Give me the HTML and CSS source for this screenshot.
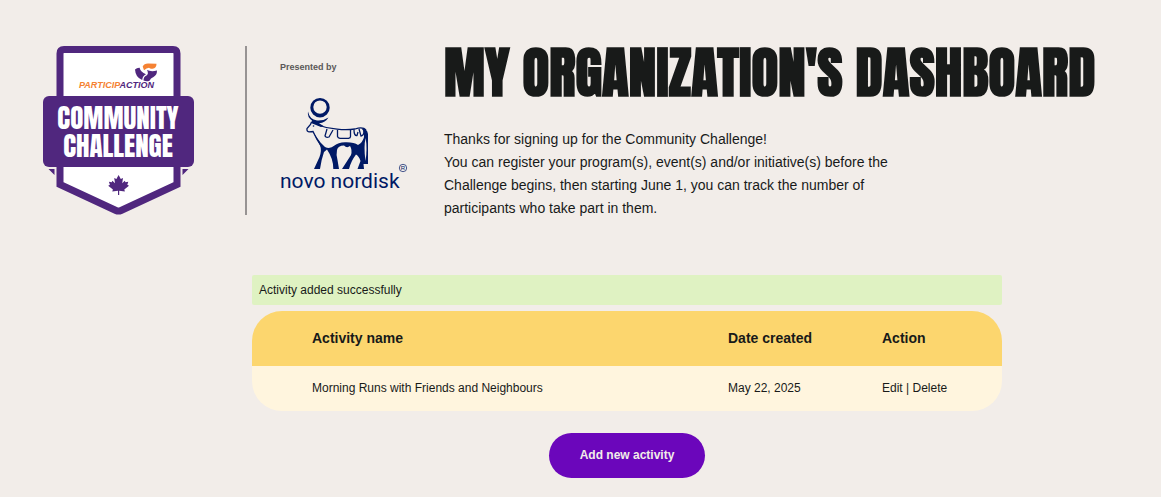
FILE: index.html
```html
<!DOCTYPE html>
<html lang="en">
<head>
    <meta charset="UTF-8">
    <meta name="viewport" content="width=device-width, initial-scale=1.0">
    <title>My Organization's Dashboard</title>
    <link rel="stylesheet" href="styles.css">
</head>
<body>
    <!-- Header -->
    <header class="header">
        <svg class="badge" viewBox="0 0 151 169" role="img" aria-label="ParticipACTION Community Challenge">
            <path class="shield" d="M21 3.500H130Q134 3.500 134 7.500V138.500L78 164.500Q75.500 165.700 73 164.500L17 138.500V7.500Q17 3.500 21 3.500Z"/>
            <path class="purple" d="M5.500 123H11.500V129Z M139.500 123H145.500L139.500 129Z"/>
            <rect class="band" x="0" y="50" width="151" height="71" rx="6"/>
            <path class="orange" d="M99.700 20.500Q101 17.500 105 17.500L113.500 17.700Q113.500 22 109.500 22.700Q107.500 23.300 106 21.800Q103.500 22 101 24.300Z"/>
            <path class="purple" d="M92 23.500Q94 21.500 96.600 21.700Q97.500 26 103 28.300Q99.500 30 99.200 34Q92.500 31.500 92 23.500Z"/>
            <path class="purple" d="M104 24Q108 26 114 24.500Q114 29 110.500 31Q107.500 32 106.500 34.800Q103.500 36 100.500 34.500Q100.500 30.500 103.500 29.500Q106 28 104 24Z"/>
            <text class="badge-brand" x="36" y="42"><tspan class="orange">PARTICIP</tspan><tspan class="purple">ACTION</tspan></text>
            <text class="badge-title" x="75" y="83">COMMUNITY</text>
            <text class="badge-title" x="75" y="111">CHALLENGE</text>
            <path class="purple" d="M75.600 129L77.800 133L80 132L79.200 137.200L81.800 134.800L82.500 136.300L85.300 135.800L84.300 138.700L86 139.700L81.300 143.500L81.900 145.400L76.200 144.700V149H75V144.700L69.300 145.400L69.900 143.500L65.200 139.700L66.900 138.700L65.900 135.800L68.700 136.300L69.400 134.800L72 137.200L71.200 132L73.400 133Z"/>
        </svg>

        <div class="sponsor">
            <p class="sponsor-label">Presented by</p>
            <svg class="sponsor-logo" viewBox="0 0 128 95" role="img" aria-label="Novo Nordisk">
                <path class="navy" fill-rule="evenodd" d="M40 1A9.700 9.700 0 1 0 40 20.400A9.700 9.700 0 1 0 40 1ZM40 3.400A6.700 6.700 0 1 1 40 16.800A6.700 6.700 0 1 1 40 3.400Z"/>
                <path class="navy" d="M28 14.500Q29.500 22.500 37 23.500Q43.500 24 48.500 20.500Q45.500 25.500 39 26.300L43.500 29L41 30L31 26L32 23.500Q27 20 28 14.500Z"/>
                <path class="navy-line" d="M31.500 25L30.500 27.500L27 31.500Q26.500 34.500 29 34.800L33 34.500L37 42.500L42 50"/>
                <path class="navy-line" d="M38 28Q47 31.500 57 32.200Q67 33.300 75 32Q83 29.500 86 33"/>
                <path class="navy-line" d="M47 32L45 39Q46 41 49 40L53 33M57.500 33V39.500Q58 41 60 41.300H68.500Q70.500 41 70.500 39.500V33M74 33Q74 39 77 38.500L78 35M79 32L81 39Q84 38.500 84 34"/>
                <circle class="navy" cx="33.500" cy="29" r="0.800"/>
                <path class="navy" d="M33 35L40.500 45.500L45 50Q50 52.500 54.500 48.500Q58 45.500 65 45.300Q74 45 78 48Q83 45 84 40Q84.500 34 81.500 31.500Q87 31 88 37V67H83.500L84 72H77.500L80.500 64Q79 59 76 57.500Q71 64 69 72H62L71 58Q72.500 53 70 49Q67 51.500 64 48.500Q58 48.500 57 53Q56 57 57.500 63L59 72H53.300Q53.500 62 47 52.500L44 55Q41.500 62 40 72H34L39.500 60Q42 53 40 48.500Z"/>
                <path class="cut" d="M85.600 41Q83.500 50 85.500 64Q87.500 52 85.600 41Z"/>
                <circle class="mark-ring" cx="123" cy="71" r="3.700"/>
                <text class="mark-text" x="123" y="73">R</text>
                <text class="sponsor-name" x="0" y="91">novo nordisk</text>
            </svg>
        </div>

        <div class="intro">
            <h1>MY ORGANIZATION'S DASHBOARD</h1>
            <p>Thanks for signing up for the Community Challenge!<br>
            You can register your program(s), event(s) and/or initiative(s) before the Challenge begins, then starting June 1, you can track the number of participants who take part in them.</p>
        </div>
    </header>

    <!-- Activities -->
    <main class="activities">
        <div class="alert" role="status">Activity added successfully</div>
        <table class="activity-table">
            <thead>
                <tr>
                    <th class="col-name" scope="col">Activity name</th>
                    <th class="col-date" scope="col">Date created</th>
                    <th scope="col">Action</th>
                </tr>
            </thead>
            <tbody>
                <tr>
                    <td>Morning Runs with Friends and Neighbours</td>
                    <td>May 22, 2025</td>
                    <td><a href="#">Edit</a> | <a href="#">Delete</a></td>
                </tr>
            </tbody>
        </table>
        <button class="add-button" type="button">Add new activity</button>
    </main>
</body>
</html>
```
FILE: styles.css
```css
body {
    background-color: #f2ede9;
    color: #181a19;
    font-family: Arial, "Liberation Sans", sans-serif;
    margin: 0;
    padding: 0;
}

.header {
    display: flex;
    align-items: flex-start;
    padding: 46px 43px 0;
}

.badge {
    flex: none;
    width: 151px;
    height: 169px;
    margin-right: 51px;
}

.shield {
    fill: #ffffff;
    stroke: #50277e;
    stroke-width: 7px;
}

.purple,
.band {
    fill: #50277e;
}

.orange {
    fill: #f58233;
}

.badge-brand {
    font-size: 9px;
    font-weight: bold;
    font-style: italic;
}

.badge-title {
    fill: #ffffff;
    font-family: Anton, "Liberation Sans Narrow", "Liberation Sans", sans-serif;
    font-size: 27px;
    text-anchor: middle;
}

.sponsor {
    flex: none;
    box-sizing: border-box;
    width: 163px;
    height: 169px;
    padding: 15px 0 0 33px;
    border-left: 2px solid #979393;
}

.sponsor-label {
    margin: 0 0 24px;
    color: #5a5858;
    font-size: 9px;
    line-height: 12px;
    font-weight: bold;
}

.sponsor-logo {
    display: block;
    width: 128px;
    height: 95px;
    overflow: visible;
}

.navy,
.sponsor-name,
.mark-text {
    fill: #001965;
}

.navy-line {
    fill: none;
    stroke: #001965;
    stroke-width: 1.3px;
}

.cut {
    fill: #f2ede9;
}

.mark-ring {
    fill: none;
    stroke: #001965;
    stroke-width: 0.7px;
}

.mark-text {
    font-size: 6px;
    text-anchor: middle;
}

.sponsor-name {
    font-family: Roboto, sans-serif;
    font-size: 21px;
}

.intro {
    flex: 1;
    padding-left: 36px;
}

.intro h1 {
    margin: 0 0 28px;
    font-family: Anton, "Liberation Sans Narrow", "Liberation Sans", sans-serif;
    font-size: 55px;
    line-height: 54px;
    font-weight: bold;
    white-space: nowrap;
}

.intro p {
    max-width: 456px;
    margin: 0;
    font-size: 14px;
    line-height: 23px;
}

.activities {
    max-width: 750px;
    margin: 55px auto 0;
    padding: 0 0 19px 93px;
    font-size: 12px;
    text-align: center;
}

.alert {
    padding: 7px;
    border-radius: 2px;
    background-color: #dff2c2;
    line-height: 16px;
    text-align: left;
}

.activity-table {
    width: 100%;
    margin: 6px 0 22px;
    border-collapse: collapse;
    border-radius: 30px;
    overflow: hidden;
    table-layout: fixed;
    text-align: left;
}

.activity-table th {
    padding: 18px 0 19px;
    background-color: #fcd66e;
    font-size: 14px;
    line-height: 18px;
}

.activity-table td {
    padding: 13px 0 14px;
    background-color: #fff5de;
    line-height: 18px;
}

.activity-table th:first-child,
.activity-table td:first-child {
    padding-left: 60px;
}

.activity-table a {
    color: inherit;
    text-decoration: none;
}

.col-name {
    width: 416px;
}

.col-date {
    width: 154px;
}

.add-button {
    padding: 14px 31px;
    border: none;
    border-radius: 23px;
    background-color: #6b06bb;
    color: #f2ede9;
    font-family: inherit;
    font-size: 12px;
    line-height: 17px;
    font-weight: bold;
    cursor: pointer;
}
```
